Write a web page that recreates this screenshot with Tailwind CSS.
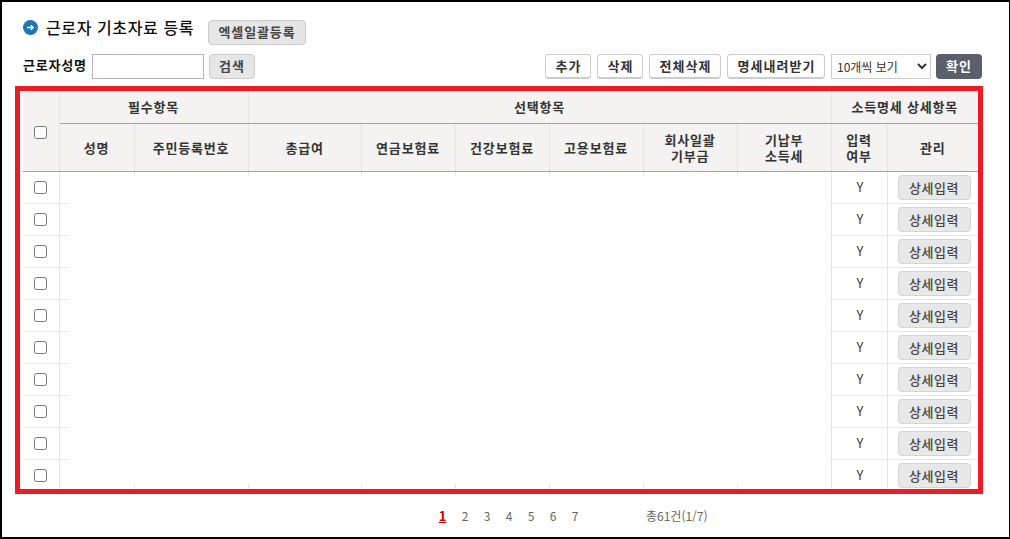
<!DOCTYPE html>
<html lang="ko">
<head>
    <meta charset="UTF-8">
    <title>근로자 기초자료 등록</title>
    <script src="https://cdn.jsdelivr.net/npm/@tailwindcss/browser@4"></script>
</head>
<body class="bg-white font-['Noto_Sans_CJK_KR','Noto_Sans',sans-serif] text-[13px] text-[#333]">
    <div class="w-[1010px] h-[539px] border-2 border-r border-black overflow-hidden pl-[13px] pr-[26px] pt-[18px]">

        <!-- title -->
        <div class="flex items-center h-[25px] pl-[8px]">
            <svg class="w-[15px] h-[15px] mr-[8px] -mt-[10px]" viewBox="0 0 15 15">
                <circle cx="7.5" cy="7.5" r="7.5" fill="#1f75b5"/>
                <path d="M4 7.5h6M7.8 5.2l2.4 2.3-2.4 2.3" fill="none" stroke="#fff" stroke-width="1.3"/>
            </svg>
            <h1 class="text-[16px] font-medium tracking-[0.6px] text-[#111] -mt-[12px] w-[162px]">근로자 기초자료 등록</h1>
            <button class="w-[98px] h-[25px] pb-[2px] bg-[#e6e6e6] border border-[#ccc] rounded-sm text-[13px] font-bold text-[#444] tracking-[0.9px]">엑셀일괄등록</button>
        </div>

        <!-- search and actions -->
        <div class="flex items-center h-[25px] mt-[9px] pl-[8px]">
            <label class="w-[69px] pb-[3px] font-bold text-[#111] tracking-[0.8px]">근로자성명</label>
            <input type="text" class="w-[112px] h-[25px] bg-white border border-[#b5b5b5]">
            <button class="w-[46px] h-[25px] ml-[5px] pb-[2px] bg-[#e6e6e6] border border-[#ccc] rounded-sm font-bold text-[#444] tracking-[1px]">검색</button>
            <button class="w-[46px] h-[25px] ml-[290px] pb-[1px] bg-white border border-[#ccc] border-b-2 rounded-sm font-bold tracking-[1px] pl-[1px]">추가</button>
            <button class="w-[46px] h-[25px] ml-[6px] pb-[1px] bg-white border border-[#ccc] border-b-2 rounded-sm font-bold tracking-[1px] pl-[1px]">삭제</button>
            <button class="w-[72px] h-[25px] ml-[6px] pb-[1px] bg-white border border-[#ccc] border-b-2 rounded-sm font-bold tracking-[1px] pl-[1px]">전체삭제</button>
            <button class="w-[98px] h-[25px] ml-[6px] pb-[1px] bg-white border border-[#ccc] border-b-2 rounded-sm font-bold tracking-[1px] pl-[1px]">명세내려받기</button>
            <select class="w-[100px] h-[25px] ml-[6px] bg-white border border-[#ccc] text-[12px] text-[#333] pl-[1px]">
                <option>10개씩 보기</option>
            </select>
            <button class="w-[46px] h-[25px] ml-[5px] pb-[2px] bg-[#5a5f6b] rounded-sm font-bold text-white tracking-[1px]">확인</button>
        </div>

        <!-- table, red outline comes from the wrapper -->
        <div class="relative w-[968px] h-[408px] mt-[7px] border-[5px] border-[#ed1c24] pl-[3px] overflow-hidden">
            <table class="table-fixed border-collapse w-[955px] text-center">
                <colgroup>
                    <col class="w-[36px]"><col class="w-[75px]"><col class="w-[114px]"><col class="w-[113px]"><col class="w-[94px]">
                    <col class="w-[94px]"><col class="w-[94px]"><col class="w-[94px]"><col class="w-[94px]"><col class="w-[56px]"><col class="w-[91px]">
                </colgroup>
                <thead class="bg-[#f4f3f1] font-bold text-[#333]">
                    <tr class="h-[32px] font-bold tracking-[0.8px]">
                        <th rowspan="2" class="border-r border-b border-r-[#e5e5e5] border-b-[#a3a3a3]"><input type="checkbox" class="align-middle"></th>
                        <th colspan="2" class="border-r border-r-[#e5e5e5] border-b border-b-[#a3a3a3]">필수항목</th>
                        <th colspan="6" class="border-r border-r-[#e5e5e5] border-b border-b-[#a3a3a3]">선택항목</th>
                        <th colspan="2" class="border-b border-b-[#a3a3a3]">소득명세 상세항목</th>
                    </tr>
                    <tr class="h-[48px] leading-[16px] tracking-[0.8px] [&>th]:pt-[2px]">
                        <th class="border-r border-r-[#e5e5e5] border-b border-b-[#a3a3a3]">성명</th>
                        <th class="border-r border-r-[#e5e5e5] border-b border-b-[#a3a3a3]">주민등록번호</th>
                        <th class="border-r border-r-[#e5e5e5] border-b border-b-[#a3a3a3]">총급여</th>
                        <th class="border-r border-r-[#e5e5e5] border-b border-b-[#a3a3a3]">연금보험료</th>
                        <th class="border-r border-r-[#e5e5e5] border-b border-b-[#a3a3a3]">건강보험료</th>
                        <th class="border-r border-r-[#e5e5e5] border-b border-b-[#a3a3a3]">고용보험료</th>
                        <th class="border-r border-r-[#e5e5e5] border-b border-b-[#a3a3a3]">회사일괄<br>기부금</th>
                        <th class="border-r border-r-[#e5e5e5] border-b border-b-[#a3a3a3]">기납부<br>소득세</th>
                        <th class="border-r border-r-[#e5e5e5] border-b border-b-[#a3a3a3]">입력<br>여부</th>
                        <th class="border-b border-b-[#a3a3a3]">관리</th>
                    </tr>
                </thead>
                <tbody id="rows"></tbody>
            </table>
            <!-- blanked out personal data -->
            <div class="absolute left-[49px] top-[85px] w-[760px] h-[308px] bg-white"></div>
        </div>

        <!-- pagination -->
        <div class="flex items-center h-[20px] mt-[12px] text-[12px] text-[#666]">
            <a class="w-[9px] ml-[423px] font-bold text-[#c00] underline text-[13px] text-center">1</a>
            <a class="ml-[14px] w-[8px] text-center">2</a>
            <a class="ml-[14px] w-[8px] text-center">3</a>
            <a class="ml-[14px] w-[8px] text-center">4</a>
            <a class="ml-[14px] w-[8px] text-center">5</a>
            <a class="ml-[14px] w-[8px] text-center">6</a>
            <a class="ml-[14px] w-[8px] text-center">7</a>
            <span class="ml-[67px]">총61건(1/7)</span>
        </div>
    </div>

    <script>
        // 10 rows, the middle columns are hidden by the white mask anyway
        const line = 'border-r border-b border-r-[#e5e5e5] border-b-[#e8e8e8]';
        let html = '';
        for (let i = 0; i < 10; i++) {
            html += `<tr class="h-[32px]">
                <td class="${line}"><input type="checkbox" class="align-middle -mt-[2px]"></td>
                <td class="${line}"></td><td class="${line}"></td><td class="${line}"></td><td class="${line}"></td>
                <td class="${line}"></td><td class="${line}"></td><td class="${line}"></td><td class="${line}"></td>
                <td class="${line} text-[#444] pl-[2px]">Y</td>
                <td class="border-b border-b-[#e8e8e8]"><button class="block ml-[10px] w-[73px] h-[25px] pt-[1px] bg-[#e8e8e8] border border-[#d4d4d4] rounded-sm text-[#444] font-medium tracking-[0.5px]">상세입력</button></td>
            </tr>`;
        }
        document.getElementById('rows').innerHTML = html;
    </script>
</body>
</html>
